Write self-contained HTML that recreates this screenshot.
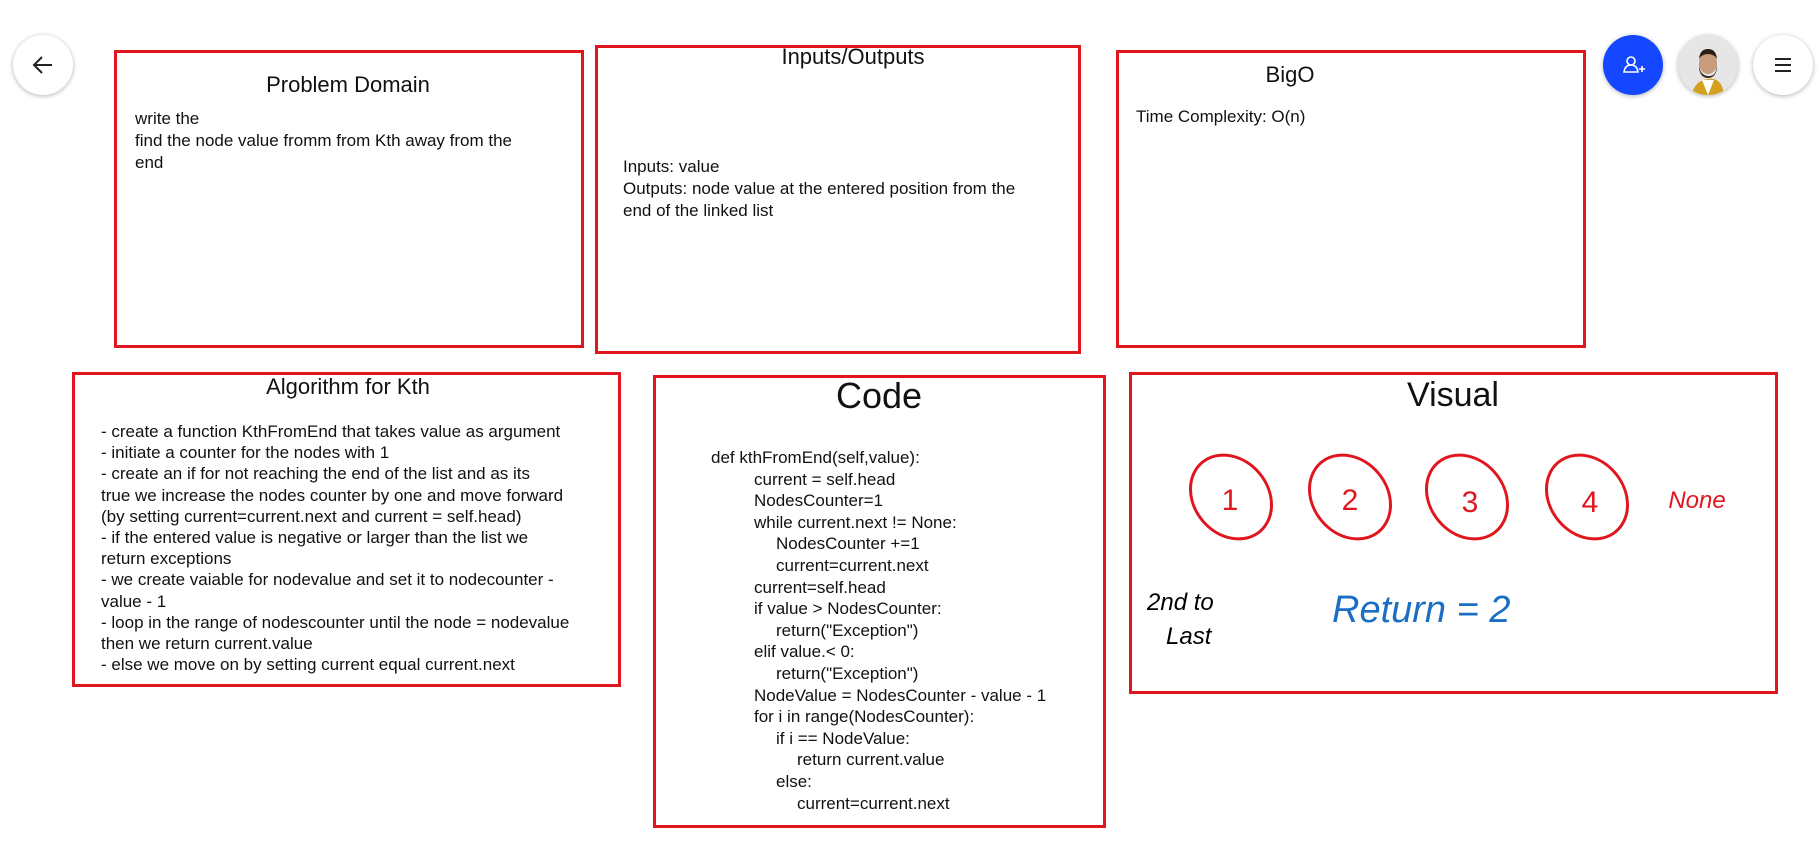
<!DOCTYPE html>
<html><head><meta charset="utf-8"><style>
body{margin:0;width:1819px;height:859px;background:#fff;position:relative;overflow:hidden;font-family:"Liberation Sans",sans-serif;color:#111}
.b{position:absolute;border:3px solid #e0161f;box-sizing:border-box}
.t{position:absolute;white-space:nowrap;font-size:17px;line-height:22px}
.c{position:absolute;transform:translateX(-50%);white-space:nowrap}
.btn{position:absolute;width:60px;height:60px;border-radius:50%;background:#fff;box-shadow:0 1px 5px rgba(0,0,0,.3)}
</style></head><body>
<div class="btn" style="left:13px;top:35px"><svg width="60" height="60"><path d="M39 30H21M29 22l-8 8 8 8" stroke="#222" stroke-width="2" fill="none"/></svg></div>
<div class="btn" style="left:1603px;top:35px;background:#1447ff"><svg width="60" height="60"><circle cx="28" cy="26" r="4" stroke="#fff" stroke-width="1.6" fill="none"/><path d="M21 37q1-7 7-7t7 7z" stroke="#fff" stroke-width="1.6" fill="none"/><path d="M36 34h6M39 31v6" stroke="#fff" stroke-width="1.6"/></svg></div>
<div class="btn" style="left:1678px;top:35px;background:#ddd;overflow:hidden"><svg width="60" height="60"><rect x="0" y="0" width="60" height="60" fill="#e6e6e6"/><path d="M14 60q2-14 16-16t16 16z" fill="#d4a020"/><path d="M24 45l6 15 6-15z" fill="#fff"/><ellipse cx="30" cy="28" rx="9" ry="11" fill="#c79b7c"/><path d="M21 28q0 12 9 13t9-13v6q-2 9-9 9t-9-9z" fill="#3a2a20"/><path d="M21 24q1-10 9-10t9 10q-3-5-9-5t-9 5z" fill="#2a1e16"/></svg></div>
<div class="btn" style="left:1753px;top:35px"><svg width="60" height="60"><path d="M22 24h16M22 30h16M22 36h16" stroke="#222" stroke-width="2"/></svg></div>

<div class="b" style="left:114px;top:50px;width:470px;height:298px"></div>
<div class="c" style="left:348px;top:72px;font-size:22px">Problem Domain</div>
<div class="t" style="left:135px;top:108px">write the<br>find the node value fromm from Kth away from the<br>end</div>

<div class="b" style="left:595px;top:45px;width:486px;height:309px"></div>
<div class="c" style="left:853px;top:44px;font-size:22px">Inputs/Outputs</div>
<div class="t" style="left:623px;top:156px">Inputs: value<br>Outputs: node value at the entered position from the<br>end of the linked list</div>

<div class="b" style="left:1116px;top:50px;width:470px;height:298px"></div>
<div class="c" style="left:1290px;top:62px;font-size:22px">BigO</div>
<div class="t" style="left:1136px;top:106px">Time Complexity: O(n)</div>

<div class="b" style="left:72px;top:372px;width:549px;height:315px"></div>
<div class="c" style="left:348px;top:374px;font-size:22px">Algorithm for Kth</div>
<div class="t" style="left:101px;top:421px;line-height:21.2px">- create a function KthFromEnd that takes value as argument<br>- initiate a counter for the nodes with 1<br>- create an if for not reaching the end of the list and as its<br>true we increase the nodes counter by one and move forward<br>(by setting current=current.next and current = self.head)<br>- if the entered value is negative or larger than the list we<br>return exceptions<br>- we create vaiable for nodevalue and set it to nodecounter -<br>value - 1<br>- loop in the range of nodescounter until the node = nodevalue<br>then we return current.value<br>- else we move on by setting current equal current.next</div>

<div class="b" style="left:653px;top:375px;width:453px;height:453px"></div>
<div class="c" style="left:879px;top:375px;font-size:36px">Code</div>
<div class="t" style="left:711px;top:447px;line-height:21.6px">def kthFromEnd(self,value):<br><span style="padding-left:43px">current = self.head</span><br><span style="padding-left:43px">NodesCounter=1</span><br><span style="padding-left:43px">while current.next != None:</span><br><span style="padding-left:65px">NodesCounter +=1</span><br><span style="padding-left:65px">current=current.next</span><br><span style="padding-left:43px">current=self.head</span><br><span style="padding-left:43px">if value &gt; NodesCounter:</span><br><span style="padding-left:65px">return("Exception")</span><br><span style="padding-left:43px">elif value.&lt; 0:</span><br><span style="padding-left:65px">return("Exception")</span><br><span style="padding-left:43px">NodeValue = NodesCounter - value - 1</span><br><span style="padding-left:43px">for i in range(NodesCounter):</span><br><span style="padding-left:65px">if i == NodeValue:</span><br><span style="padding-left:86px">return current.value</span><br><span style="padding-left:65px">else:</span><br><span style="padding-left:86px">current=current.next</span></div>

<div class="b" style="left:1129px;top:372px;width:649px;height:322px"></div>
<div class="c" style="left:1453px;top:376px;font-size:34px">Visual</div>
<svg style="position:absolute;left:0;top:0" width="1819" height="859">
<g stroke="#e0161f" stroke-width="3" fill="none">
<ellipse cx="1231" cy="497" rx="45" ry="37" transform="rotate(50 1231 497)"/>
<ellipse cx="1350" cy="497" rx="45" ry="37" transform="rotate(50 1350 497)"/>
<ellipse cx="1467" cy="497" rx="45" ry="37" transform="rotate(50 1467 497)"/>
<ellipse cx="1587" cy="497" rx="45" ry="37" transform="rotate(50 1587 497)"/>
</g>
<g fill="#e0161f" font-family="Liberation Sans" font-size="30" text-anchor="middle">
<text x="1230" y="510">1</text><text x="1350" y="510">2</text><text x="1470" y="512">3</text><text x="1590" y="512">4</text>
<text x="1697" y="508" font-size="24" font-style="italic">None</text></g>
<g font-family="Liberation Sans" font-style="italic">
<text x="1147" y="610" font-size="24">2nd to</text><text x="1166" y="644" font-size="24">Last</text>
<text x="1332" y="622" font-size="38" fill="#1a6fc4">Return = 2</text></g>
</svg>
</body></html>
